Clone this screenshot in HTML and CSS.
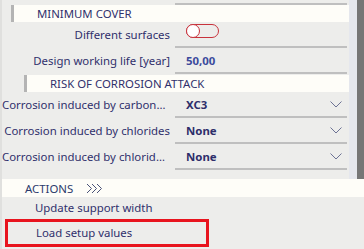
FILE: index.html
```html
<!DOCTYPE html>
<html lang="en">
<head>
  <meta charset="UTF-8">
  <title>Properties</title>
  <link rel="stylesheet" href="styles.css">
</head>
<body>

  <div id="panel">
    <div id="scroller">
      <div id="content">
        <div class="row stub">
          <div class="label"></div>
          <div class="value"></div>
        </div>

        <div class="section"><span>MINIMUM COVER</span></div>

        <div class="row">
          <div class="label">Different surfaces</div>
          <div class="value">
            <span class="toggle"><span class="knob"></span></span>
          </div>
        </div>
        <div class="row">
          <div class="label">Design working life [year]</div>
          <div class="value num">50,00</div>
        </div>

        <div class="section sub"><span>RISK OF CORROSION ATTACK</span></div>

        <div class="row">
          <div class="label">Corrosion induced by carbonation</div>
          <div class="value combo">
            <span>XC3</span>
            <svg class="chevron" width="12" height="7" viewBox="0 0 12 7"><polyline points="0.5,0.5 6,6 11.5,0.5" /></svg>
          </div>
        </div>
        <div class="row">
          <div class="label">Corrosion induced by chlorides</div>
          <div class="value combo">
            <span>None</span>
            <svg class="chevron" width="12" height="7" viewBox="0 0 12 7"><polyline points="0.5,0.5 6,6 11.5,0.5" /></svg>
          </div>
        </div>
        <div class="row">
          <div class="label">Corrosion induced by chlorides from sea water</div>
          <div class="value combo">
            <span>None</span>
            <svg class="chevron" width="12" height="7" viewBox="0 0 12 7"><polyline points="0.5,0.5 6,6 11.5,0.5" /></svg>
          </div>
        </div>
      </div>
      <div id="track"></div>
      <div id="thumb"></div>
    </div>

    <div id="actions-head">
      <span>ACTIONS</span>
      <svg width="18" height="11" viewBox="0 0 18 11">
        <polyline points="1,1 5.5,5.5 1,10" />
        <polyline points="6,1 10.5,5.5 6,10" />
        <polyline points="11,1 15.5,5.5 11,10" />
      </svg>
    </div>
    <div class="action">Update support width</div>
    <div class="action selected">Load setup values</div>
  </div>

</body>
</html>
```

FILE: styles.css
```css
body {
  margin: 0;
  background-color: #ededeb;
  font-family: "Noto Sans", sans-serif;
  font-size: 11.4px;
  color: #30306c;
}

#panel {
  width: 362px;
  height: 249px;
  border-left: 2px solid #e0e0de;
  overflow: hidden;
}

#scroller {
  display: flex;
  height: 179px;
}

#content {
  width: 347px;
}

#track {
  width: 8px;
  background: #e5e7ed;
}

#thumb {
  width: 7px;
  background: #767676;
}

.row {
  display: flex;
  height: 26px;
}

.row .label {
  width: 168px;
  line-height: 25px;
  text-align: right;
  white-space: nowrap;
  overflow: hidden;
  text-overflow: ellipsis;
}

.row .value {
  width: 172px;
  margin-left: 5px;
  box-sizing: border-box;
  border-bottom: 2px solid #bfbfbf;
  padding-left: 11px;
  display: flex;
  align-items: center;
}

.row.stub {
  height: 5px;
}

.num {
  font-weight: bold;
  color: #3b4a9c;
}

.combo {
  justify-content: space-between;
  padding-right: 5px;
  font-weight: bold;
  color: #2e2e6a;
}

.chevron polyline {
  fill: none;
  stroke: #6c7294;
  stroke-width: 1;
}

.toggle {
  width: 31px;
  height: 12px;
  border: 1px solid #c8323c;
  border-radius: 7px;
  position: relative;
  margin-top: -6px;
}

.knob {
  position: absolute;
  left: -1px;
  top: -1px;
  width: 12px;
  height: 12px;
  border: 1px solid #c8323c;
  border-radius: 50%;
  background: #fff;
}

.section {
  margin-left: 9px;
  height: 17px;
  line-height: 17px;
  background: #fefdf8;
  border-left: 3px solid #b4b4b4;
  padding-left: 23px;
  box-sizing: border-box;
}

.section.sub {
  margin-left: 22px;
  margin-top: 1px;
}

#actions-head {
  height: 18px;
  background: #fefdf8;
  display: flex;
  align-items: center;
  padding-left: 23px;
  color: #2b3a6c;
}

#actions-head svg {
  margin-left: 13px;
}

#actions-head polyline {
  fill: none;
  stroke: #4a5278;
  stroke-width: 1;
}

.action {
  height: 22px;
  line-height: 22px;
  padding-left: 33px;
}

.action.selected {
  width: 204px;
  height: 28px;
  line-height: 22px;
  margin-left: 3px;
  padding-left: 28px;
  box-sizing: border-box;
  border: 3px solid #e8141e;
}
```
